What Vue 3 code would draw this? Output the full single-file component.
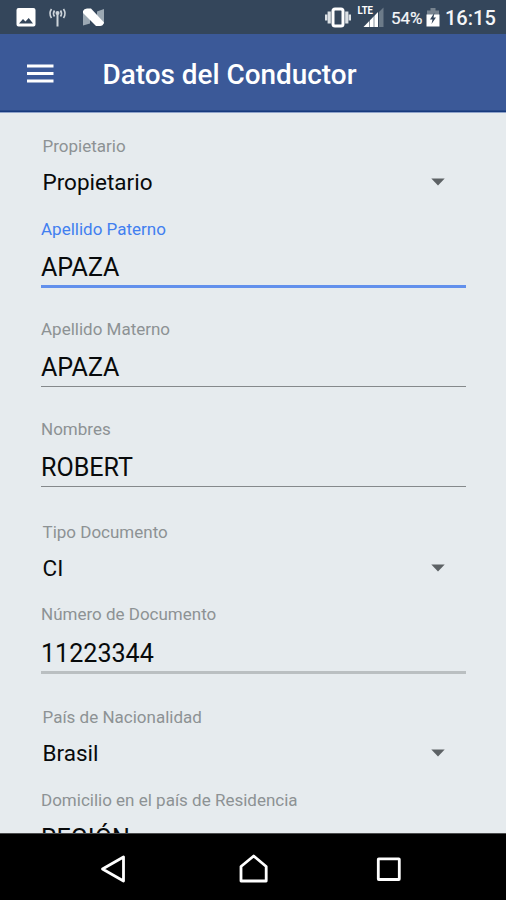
<script setup>
const fields = [
  { type: 'select', label: 'Propietario', value: 'Propietario' },
  { type: 'input', label: 'Apellido Paterno', value: 'APAZA', state: 'active' },
  { type: 'input', label: 'Apellido Materno', value: 'APAZA' },
  { type: 'input', label: 'Nombres', value: 'ROBERT' },
  { type: 'select', label: 'Tipo Documento', value: 'CI' },
  { type: 'input', label: 'Número de Documento', value: '11223344', state: 'soft' },
  { type: 'select', label: 'País de Nacionalidad', value: 'Brasil' },
  { type: 'input', label: 'Domicilio en el país de Residencia', value: 'REGIÓN' },
]
</script>

<template>
  <div class="screen">
    <div class="status">
      <svg width="110" height="34" viewBox="0 0 110 34">
        <path fill="#fff" fill-rule="evenodd" d="M18.500 8H33.500a2 2 0 0 1 2 2v14.500a2 2 0 0 1-2 2H18.500a2 2 0 0 1-2-2V10a2 2 0 0 1 2-2zM19 23.500h14l-4.300-5.500-3.200 3.500-2.500-2.500z" />
        <g fill="none" stroke="#cdd4da" stroke-width="1.700">
          <path d="M57.500 13v13.500" stroke-width="2" />
          <path d="M54.500 10.500q-2 3 0 6M60.500 10.500q2 3 0 6M51.500 9q-3 4.500 0 9M63.500 9q3 4.500 0 9" />
        </g>
        <circle cx="57.500" cy="13" r="2" fill="#cdd4da" />
        <path fill="#9ba8b3" d="M83 12l7 6v5.500l-7 2zM97 11.500l7-2.500V24l-7-5z" />
        <path fill="#fff" d="M83 11q1-2.500 4-2.500h4L104 22.500q-1 3.500-4 3.500h-4L83 13z" />
      </svg>
      <div class="right">
        <svg width="76" height="34" viewBox="324 0 76 34">
          <rect x="333" y="9" width="10" height="17" rx="2" fill="none" stroke="#fff" stroke-width="3" />
          <path d="M329.200 11.500v12M346.800 11.500v12" stroke="#dce1e5" stroke-width="3.200" />
          <path d="M326.200 14.500v6M349.800 14.500v6" stroke="#dce1e5" stroke-width="2.400" />
          <text x="357.500" y="13.500" class="lte" textLength="15.500" lengthAdjust="spacingAndGlyphs">LTE</text>
          <path fill="#fff" d="M363.500 27L378 12v15z" />
          <path d="M369.500 19v8M374 15v12" stroke="#34465b" stroke-width=".6" />
          <path fill="#6c7b89" d="M379 12l4.500-4.500V27H379z" />
        </svg>
        <span class="percent">54%</span>
        <svg class="battery" width="14" height="34" viewBox="0 0 14 34">
          <path fill="#77838f" d="M4.500 8h5v2.500H13V16H1v-5.500h3.500z" />
          <path fill="#fff" d="M.5 14.500h13v12H.5z" />
          <path fill="#34465b" d="M8.500 12.500L4 19.500h2.500L5.500 24l4.500-6.500H7.500z" />
        </svg>
        <span class="clock">16:15</span>
      </div>
    </div>
    <header class="bar">
      <svg width="27" height="22" viewBox="0 0 27 22">
        <path d="M0 3h26.500M0 10.500h26.500M0 18h26.500" stroke="#fff" stroke-width="3" />
      </svg>
      <h1>Datos del Conductor</h1>
    </header>
    <main class="form">
      <div v-for="f in fields" :key="f.label" class="field" :class="[f.type, f.state]">
        <label>{{ f.label }}</label>
        <div class="value">
          <span>{{ f.value }}</span>
          <svg v-if="f.type === 'select'" width="14" height="8" viewBox="0 0 14 8">
            <path d="M.3.500h13.400L7 7.500z" fill="#5d6265" />
          </svg>
        </div>
      </div>
    </main>
    <nav class="nav">
      <svg width="30" height="32" viewBox="99 853 30 32"><path d="M123.500 857v24L102.500 869z" /></svg>
      <svg width="32" height="32" viewBox="237 853 32 32"><path d="M241 881v-14.500L253.700 856l12.500 10.500V881z" /></svg>
      <svg width="30" height="32" viewBox="374 853 30 32"><rect x="378.300" y="858.800" width="21" height="20.700" rx=".5" /></svg>
    </nav>
  </div>
</template>

<style>
body { margin: 0; }
</style>

<style scoped>
.screen {
  width: 506px;
  height: 900px;
  display: flex;
  flex-direction: column;
  overflow: hidden;
  background: #e6ebee;
  font-family: Roboto, sans-serif;
}
svg { display: block; flex: none; }
.status {
  height: 34px;
  flex: none;
  display: flex;
  justify-content: space-between;
  background: #34465b;
  color: #f4f6f8;
}
.right { display: flex; width: 182px; line-height: 36px; white-space: nowrap; }
.lte { font: 700 10.500px Roboto, sans-serif; fill: #fff; }
.percent { width: 34px; margin-left: -9px; font-size: 17px; -webkit-text-stroke: .2px; }
.battery { margin-left: 1px; }
.clock { margin-left: 5px; font-size: 20px; font-weight: 500; }
.bar {
  height: 79px;
  box-sizing: border-box;
  flex: none;
  display: flex;
  align-items: center;
  gap: 49px;
  padding: 4px 0 0 26.500px;
  background: #3b5998;
  border-bottom: 1px solid #8fa3ca;
  box-shadow: inset 0 -1.500px #173a7d;
}
h1 { margin: 0; color: #fff; font-size: 27.900px; line-height: 34px; font-weight: 500; white-space: nowrap; }
.bar svg { margin-top: -3px; }
.form { flex: 1; min-height: 0; overflow: hidden; padding: 20.500px 40px 0 41px; }
.field { height: 100px; }
.field label { display: block; padding-bottom: 2px; color: #8d9294; font-size: 17px; line-height: 18px; white-space: nowrap; }
.value { display: flex; color: #080a0b; }
.input label { padding-top: .5px; }
.input .value {
  height: 33.500px;
  margin-top: 12.500px;
  font-size: 25.100px;
  line-height: 32px;
  border-bottom: 1.500px solid #85898b;
}
.input.active label { color: #427ff0; }
.input.active .value { height: 33px; border-bottom: 3px solid #6290ec; }
.input.soft .value { height: 33px; border-bottom: 3px solid #babfc1; }
.select { height: 82px; padding: 3.500px 0 0 1.500px; }
.select .value {
  margin-top: 11px;
  padding-right: 21px;
  font-size: 22.500px;
  line-height: 28px;
  height: 28px;
  align-items: center;
  justify-content: space-between;
}
.nav {
  height: 67px;
  box-sizing: border-box;
  flex: none;
  display: flex;
  justify-content: space-between;
  padding: 19px 102px 0 99px;
  background: #000;
  border-top: 1px solid #4a4b4c;
}
.nav svg:nth-child(2) { margin-left: 2px; }
.nav path, .nav rect { fill: none; stroke: #fff; stroke-width: 2.800; stroke-linejoin: round; }
</style>
